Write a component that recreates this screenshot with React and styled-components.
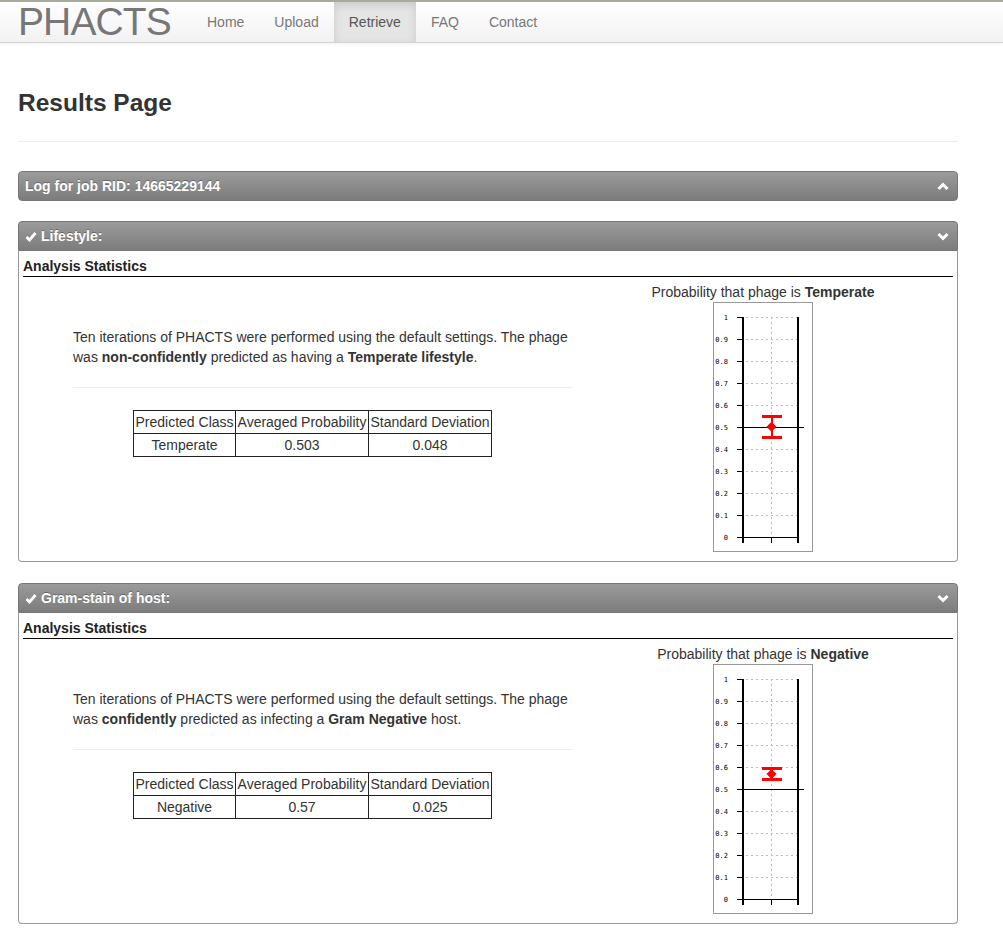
import React from "react";
import styled, { createGlobalStyle } from "styled-components";

const GlobalStyle = createGlobalStyle`
  body {
    margin: 0;
    background: #fff;
    font-family: "Liberation Sans", Helvetica, Arial, sans-serif;
    font-size: 14px;
    line-height: 20px;
    color: #333;
  }
`;

const Navbar = styled.div`
  border-top: 2px solid #a7ab9b;
  border-bottom: 1px solid #d4d4d4;
  background: linear-gradient(#ffffff, #f2f2f2);
  box-shadow: 0 1px 4px rgba(0, 0, 0, 0.065);
  height: 40px;
`;

const NavInner = styled.div`
  display: flex;
  padding-left: 18px;
`;

const Brand = styled.div`
  width: 174px;
  font-size: 39px;
  line-height: 40px;
  color: #777;
  letter-spacing: -0.9px;
`;

const NavLink = styled.a`
  padding: 10px 15px;
  line-height: 20px;
  color: ${({ active }) => (active ? "#555" : "#777")};
  background: ${({ active }) => (active ? "#e5e5e5" : "transparent")};
  box-shadow: ${({ active }) => (active ? "inset 0 3px 8px rgba(0,0,0,0.125)" : "none")};
  text-decoration: none;
`;

const Container = styled.div`
  width: 940px;
  padding: 0 18px;
`;

const PageHeader = styled.div`
  margin-top: 45px;
  padding-bottom: 23px;
  border-bottom: 1px solid #eee;
  margin-bottom: 29px;
`;

const Title = styled.h1`
  margin: 0;
  font-size: 24.5px;
  line-height: 30px;
  font-weight: bold;
  color: #333;
`;

const Panel = styled.div`
  margin-bottom: ${({ gap }) => gap}px;
`;

const PanelHeader = styled.div`
  display: flex;
  align-items: center;
  justify-content: space-between;
  height: 28px;
  padding: 0 8px 0 6px;
  border: 1px solid #777;
  border-radius: ${({ open }) => (open ? "4px 4px 0 0" : "4px")};
  background: linear-gradient(#9b9b9b, #7c7c7c);
  color: #fff;
  font-weight: bold;
  text-shadow: 0 -1px 0 rgba(0, 0, 0, 0.3);
`;

const HeaderLabel = styled.span`
  display: flex;
  align-items: center;
  gap: 4px;
`;

const PanelBody = styled.div`
  border: 1px solid #9a9a9a;
  border-top: none;
  border-radius: 0 0 4px 4px;
  padding: 5px 4px 9px;
`;

const SectionHeading = styled.div`
  font-weight: bold;
  color: #222;
  border-bottom: 1.5px solid #000;
  line-height: 20px;
`;

const Row = styled.div`
  display: flex;
  margin-top: 5px;
`;

const LeftCol = styled.div`
  width: 500px;
  padding: 45px 0 0 50px;
`;

const Para = styled.p`
  margin: 0;
  color: #333;
`;

const Rule = styled.hr`
  margin: 20px 0 22px;
  border: 0;
  border-top: 1px solid #eee;
`;

const Table = styled.table`
  margin-left: 60px;
  border-collapse: collapse;
  border: 1px solid #222;
  color: #333;
`;

const Cell = styled.td`
  border: 1px solid #222;
  padding: 1px 1.5px;
  text-align: center;
  white-space: nowrap;
`;

const RightCol = styled.div`
  flex: 1;
  display: flex;
  flex-direction: column;
  align-items: center;
`;

const ChartTitle = styled.div`
  line-height: 20px;
  color: #333;
`;

const ChartBox = styled.div`
  width: 98px;
  height: 248px;
  border: 1px solid #999;
  background: #fff;
`;

const yOf = (v) => 14.5 + (1 - v) * 220;

const Chart = ({ value, sd }) => {
  const ticks = [1, 0.9, 0.8, 0.7, 0.6, 0.5, 0.4, 0.3, 0.2, 0.1, 0];
  const ym = yOf(value);
  const yt = yOf(value + sd);
  const yb = yOf(value - sd);
  return (
    <ChartBox>
      <svg width="98" height="248" shapeRendering="crispEdges">
        {ticks.map((t) => (
          <g key={t}>
            <text
              x="14"
              y={yOf(t) + 2.5}
              textAnchor="end"
              fontSize="7"
              fontFamily="'DejaVu Sans Mono', monospace"
              fill="#000"
            >
              {t === 1 || t === 0 ? String(t) : t.toFixed(1)}
            </text>
            <line x1="23" x2="30" y1={yOf(t)} y2={yOf(t)} stroke="#000" strokeWidth="1.5" />
            {t !== 0 && t !== 0.5 && (
              <line x1="32" x2="83" y1={yOf(t)} y2={yOf(t)} stroke="#bbb" strokeDasharray="2 3" />
            )}
          </g>
        ))}
        <line x1="57.5" x2="57.5" y1="14" y2="232" stroke="#bbb" strokeDasharray="2 3" />
        <line x1="29" x2="29" y1="14" y2="240" stroke="#000" strokeWidth="1.5" />
        <line x1="84" x2="84" y1="14" y2="240" stroke="#000" strokeWidth="1.5" />
        <line x1="29" x2="84" y1="234.5" y2="234.5" stroke="#000" strokeWidth="1.5" />
        <line x1="57.5" x2="57.5" y1="234" y2="240" stroke="#000" strokeWidth="1.5" />
        <line x1="29" x2="90" y1={yOf(0.5)} y2={yOf(0.5)} stroke="#000" strokeWidth="1.2" />
        <line x1="57.5" x2="57.5" y1={yt} y2={yb} stroke="#f00" strokeWidth="2" />
        <line x1="48" x2="68" y1={yt} y2={yt} stroke="#f00" strokeWidth="2.5" />
        <line x1="48" x2="68" y1={yb} y2={yb} stroke="#f00" strokeWidth="2.5" />
        <polygon
          points={`57.5,${ym - 5} 62.5,${ym} 57.5,${ym + 5} 52.5,${ym}`}
          fill="#f00"
          shapeRendering="auto"
        />
      </svg>
    </ChartBox>
  );
};

const Chevron = ({ up }) => (
  <svg width="12" height="9" viewBox="0 0 12 9">
    <polyline
      points={up ? "1.5,7 6,2.5 10.5,7" : "1.5,2 6,6.5 10.5,2"}
      fill="none"
      stroke="#fff"
      strokeWidth="3"
    />
  </svg>
);

const Check = () => (
  <svg width="12" height="11" viewBox="0 0 12 11">
    <polyline points="1.5,6 4.5,9 10.5,2" fill="none" stroke="#fff" strokeWidth="2.8" />
  </svg>
);

const results = [
  {
    name: "Lifestyle:",
    cls: "Temperate",
    prob: "0.503",
    sd: "0.048",
    text: (
      <>
        Ten iterations of PHACTS were performed using the default settings. The phage was{" "}
        <b>non-confidently</b> predicted as having a <b>Temperate lifestyle</b>.
      </>
    ),
  },
  {
    name: "Gram-stain of host:",
    cls: "Negative",
    prob: "0.57",
    sd: "0.025",
    text: (
      <>
        Ten iterations of PHACTS were performed using the default settings. The phage was{" "}
        <b>confidently</b> predicted as infecting a <b>Gram Negative</b> host.
      </>
    ),
  },
];

const ResultPanel = ({ r, gap }) => (
  <Panel gap={gap}>
    <PanelHeader open>
      <HeaderLabel>
        <Check />
        {r.name}
      </HeaderLabel>
      <Chevron />
    </PanelHeader>
    <PanelBody>
      <SectionHeading>Analysis Statistics</SectionHeading>
      <Row>
        <LeftCol>
          <Para>{r.text}</Para>
          <Rule />
          <Table>
            <tbody>
              <tr>
                <Cell>Predicted Class</Cell>
                <Cell>Averaged Probability</Cell>
                <Cell>Standard Deviation</Cell>
              </tr>
              <tr>
                <Cell>{r.cls}</Cell>
                <Cell>{r.prob}</Cell>
                <Cell>{r.sd}</Cell>
              </tr>
            </tbody>
          </Table>
        </LeftCol>
        <RightCol>
          <ChartTitle>
            Probability that phage is <b>{r.cls}</b>
          </ChartTitle>
          <Chart value={parseFloat(r.prob)} sd={parseFloat(r.sd)} />
        </RightCol>
      </Row>
    </PanelBody>
  </Panel>
);

const App = () => {
  const links = ["Home", "Upload", "Retrieve", "FAQ", "Contact"];
  return (
    <>
      <GlobalStyle />
      <Navbar>
        <NavInner>
          <Brand>PHACTS</Brand>
          {links.map((l) => (
            <NavLink key={l} active={l === "Retrieve" ? 1 : 0}>
              {l}
            </NavLink>
          ))}
        </NavInner>
      </Navbar>
      <Container>
        <PageHeader>
          <Title>Results Page</Title>
        </PageHeader>
        <Panel gap={20}>
          <PanelHeader>
            <span>Log for job RID: 14665229144</span>
            <Chevron up />
          </PanelHeader>
        </Panel>
        <ResultPanel r={results[0]} gap={21} />
        <ResultPanel r={results[1]} gap={20} />
      </Container>
    </>
  );
};

export default App;
